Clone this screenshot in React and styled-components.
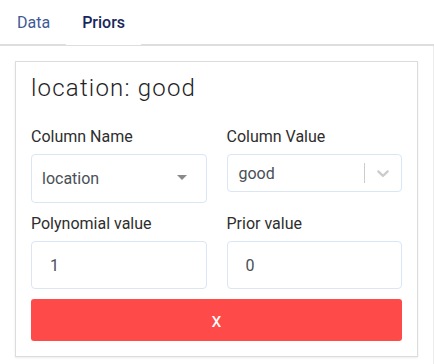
import React from "react"
import styled, { createGlobalStyle } from "styled-components"

const GlobalStyle = createGlobalStyle`
    body {
        margin: 0;
        background: #fff;
        font-family: Roboto, "Liberation Sans", sans-serif;
        color: #212529;
    }
`
const Page = styled.div`
    width: 434px;
`
const TabBar = styled.div`
    display: flex;
    align-items: flex-end;
    height: 44px;
    border-bottom: 2px solid #dedede;
`
const Tab = styled.div`
    padding: 11px 16px 9px;
    font-size: 16px;
    line-height: 24px;
    color: ${props => props.active ? "#17275c" : "#3f5a96"};
    font-weight: ${props => props.active ? 500 : 400};
    background: #fff;
    margin-bottom: ${props => props.active ? "-1px" : "0"};
    height: ${props => props.active ? "45px" : "44px"};
    box-sizing: border-box;
    &:first-child {
        padding-left: 17px;
    }
`
const Pane = styled.div`
    padding: 15px;
    border-right: 1px solid #ececec;
`
const Card = styled.div`
    border: 1px solid #dcdcdc;
    box-shadow: 0 1px 2px rgba(0, 0, 0, 0.08);
    padding: 12px 15px 15px;
`
const Title = styled.h2`
    margin: 0 0 22px;
    font-size: 24px;
    line-height: 29px;
    font-weight: 300;
    letter-spacing: 1.2px;
    color: #1f2326;
`
const FieldGrid = styled.div`
    display: grid;
    grid-template-columns: 1fr 1fr;
    column-gap: 20px;
    row-gap: 9px;
    align-items: start;
`
const Field = styled.div`
    display: flex;
    flex-direction: column;
`
const Label = styled.label`
    font-size: 16px;
    line-height: 24px;
    color: #2e2e2e;
    margin-bottom: 5px;
`
const Box = styled.div`
    position: relative;
    display: flex;
    align-items: center;
    height: ${props => props.h}px;
    border: 1px solid #dbe6f5;
    border-radius: 4px;
    box-sizing: border-box;
    padding-left: ${props => props.pad}px;
    font-size: 16px;
    color: #495057;
    background: #fff;
`
const Caret = styled.span`
    position: absolute;
    right: 19px;
    top: 20px;
    width: 0;
    height: 0;
    border-left: 5px solid transparent;
    border-right: 5px solid transparent;
    border-top: 5px solid #8a8a8a;
`
const Value = styled.span`
    flex: 1;
`
const Separator = styled.span`
    width: 1px;
    align-self: stretch;
    margin: 8px 0;
    background: #cccccc;
`
const Indicator = styled.span`
    display: flex;
    padding: 8px;
    color: #cccccc;
`
const RemoveButton = styled.button`
    display: block;
    width: 100%;
    height: 42px;
    margin-top: 10px;
    border: none;
    border-radius: 3px;
    background: #ff4a4a;
    color: #fff;
    font-family: Roboto, "Liberation Sans", sans-serif;
    font-size: 20px;
    line-height: 24px;
`

const Chevron = () => (
    <svg width="20" height="20" viewBox="0 0 20 20" fill="currentColor">
        <path d="M4.516 7.548c0.436-0.446 1.043-0.481 1.576 0l3.908 3.747 3.908-3.747c0.533-0.481 1.141-0.446 1.574 0 0.436 0.445 0.408 1.197 0 1.615-0.406 0.418-4.695 4.502-4.695 4.502-0.217 0.223-0.502 0.335-0.787 0.335s-0.57-0.112-0.789-0.335c0 0-4.287-4.084-4.695-4.502s-0.436-1.17 0-1.615z" />
    </svg>
)

const App = () => {
  return (
    <Page>
        <GlobalStyle />
        <TabBar>
            <Tab>Data</Tab>
            <Tab active>Priors</Tab>
        </TabBar>
        <Pane>
            <Card>
                <Title>location: good</Title>
                <FieldGrid>
                    <Field>
                        <Label>Column Name</Label>
                        <Box h={49} pad={10}>
                            <Value>location</Value>
                            <Caret />
                        </Box>
                    </Field>
                    <Field>
                        <Label>Column Value</Label>
                        <Box h={38} pad={11}>
                            <Value>good</Value>
                            <Separator />
                            <Indicator><Chevron /></Indicator>
                        </Box>
                    </Field>
                    <Field>
                        <Label>Polynomial value</Label>
                        <Box h={48} pad={18}>1</Box>
                    </Field>
                    <Field>
                        <Label>Prior value</Label>
                        <Box h={48} pad={18}>0</Box>
                    </Field>
                </FieldGrid>
                <RemoveButton>x</RemoveButton>
            </Card>
        </Pane>
    </Page>
  )
}

export default App
